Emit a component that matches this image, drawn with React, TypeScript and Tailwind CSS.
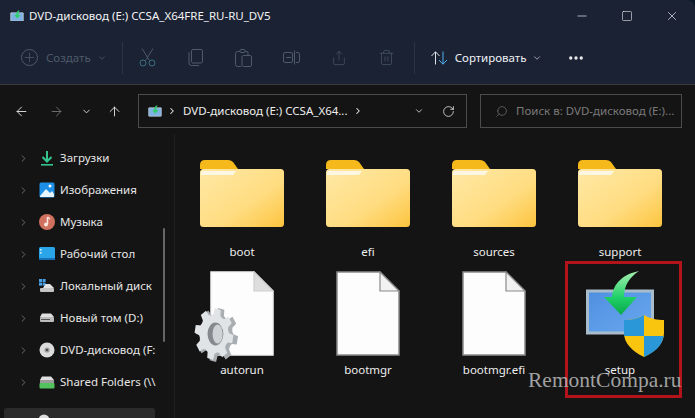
import React from "react";
import { ArrowLeft, ArrowRight, ArrowUp, ChevronDown, ChevronRight, RotateCw, Search, Minus, Square, X, Plus, Share, Trash2, MoreHorizontal } from "lucide-react";

function DriveIcon({ size = 17 }: { size?: number }) {
  return (
    <svg width={size} height={size * 0.85} viewBox="0 0 20 17" className="shrink-0">
      <rect x="1" y="4" width="18" height="12" rx="0.5" fill="#7fb2e0" stroke="#c8d2dc" strokeWidth="1" />
      <path d="M14 0 C10 1 9 3 9 7 H6 L10.5 12 L15 7 H12 C12 4 12.5 2 14 0Z" fill="#2ecf6a" />
    </svg>
  );
}

function Folder({ id }: { id: string }) {
  return (
    <svg width="84" height="67" viewBox="0 0 84 67" className="shrink-0">
      <defs>
        <linearGradient id={id} x1="0" y1="0" x2="1" y2="1">
          <stop offset="0" stopColor="#ffe9a6" />
          <stop offset="0.6" stopColor="#ffdc80" />
          <stop offset="1" stopColor="#fcc43e" />
        </linearGradient>
      </defs>
      <path d="M0 5 Q0 0 5 0 H28 Q31 0 33 2 L38 9 H0Z" fill="#f6b91c" />
      <rect x="0" y="9" width="84" height="58" rx="3.5" fill={`url(#${id})`} />
      <path d="M1 13 Q1 11 3 11 H36 L33 15 H1Z" fill="#fdf6e3" />
    </svg>
  );
}

function FileDoc({ shaded }: { shaded?: boolean }) {
  return (
    <svg width="64" height="85" viewBox="0 0 64 85" className="block shrink-0">
      <path d="M1 1 H44 L63 20 V84 H1Z" fill="#fdfdfd" stroke={shaded ? "#f2f2f2" : "#8a8a8a"} strokeWidth="1.5" />
      <path d="M44 1 V20 H63Z" fill={shaded ? "#dedede" : "#f2f2f2"} stroke={shaded ? "#cfcfcf" : "#8a8a8a"} strokeWidth="1.2" />
    </svg>
  );
}

const gearPoints = (() => {
  const pts: string[] = [];
  for (let i = 0; i < 8; i++) {
    const a = (i * Math.PI) / 4 + 0.2;
    const step = Math.PI / 4;
    const add = (r: number, t: number) =>
      pts.push(`${(r * Math.cos(a + t * step)).toFixed(1)},${(r * Math.sin(a + t * step)).toFixed(1)}`);
    add(20, -0.5);
    add(21, -0.3);
    add(27, -0.2);
    add(27, 0.2);
    add(21, 0.3);
  }
  return pts.join(" ");
})();

function Gear() {
  return (
    <svg width="46" height="55" viewBox="0 0 46 55" className="absolute left-[-17px] top-[36px]">
      <g transform="translate(24 28) scale(0.78 1)">
        <polygon points={gearPoints} fill="#a9aeb3" />
      </g>
      <g transform="translate(21 27) scale(0.72 0.95)">
        <polygon points={gearPoints} fill="#e1e4e7" />
        <ellipse cx="2" cy="0" rx="11" ry="12" fill="#85898e" />
        <ellipse cx="5" cy="0" rx="7" ry="10" fill="#cfd2d5" />
      </g>
    </svg>
  );
}

function SetupIcon() {
  return (
    <svg width="92" height="88" viewBox="-12 0 92 88" className="shrink-0">
      <defs>
        <linearGradient id="scr" x1="0" y1="0" x2="1" y2="1">
          <stop offset="0" stopColor="#4f8fe0" />
          <stop offset="1" stopColor="#6aa8ee" />
        </linearGradient>
        <linearGradient id="arr" x1="0" y1="0" x2="0" y2="1">
          <stop offset="0" stopColor="#a8f0b0" />
          <stop offset="0.6" stopColor="#1fd067" />
          <stop offset="1" stopColor="#0aa84a" />
        </linearGradient>
      </defs>
      <rect x="1.5" y="20" width="65" height="42" fill="url(#scr)" stroke="#a9bccb" strokeWidth="3" />
      <path d="M53 0 C38 3 27 12 26 26 H18 L35 44 L51 26 H38 C38 14 44 6 53 0Z" fill="url(#arr)" />
      <path d="M58 44 C64 48 72 49 78 49 V62 C78 72 70 80 58 86 C46 80 38 72 38 62 V49 C44 49 52 48 58 44Z" fill="#fac50f" />
      <path d="M58 44 C52 48 44 49 38 49 V62 C38 63 38 64 38.3 65 H58Z" fill="#2a98d8" />
      <path d="M58 65 H77.7 C76 75 69 81 58 86Z" fill="#2a98d8" />
    </svg>
  );
}

const nav: { label: string; icon: React.ReactNode }[] = [
  {
    label: "Загрузки",
    icon: (
      <svg width="16" height="17" viewBox="0 0 16 17">
        <path d="M8 1 V11 M3.5 7 L8 11.5 L12.5 7" stroke="#35c48d" strokeWidth="2" fill="none" />
        <rect x="2" y="14" width="12" height="1.6" fill="#35c48d" />
      </svg>
    ),
  },
  {
    label: "Изображения",
    icon: (
      <svg width="16" height="16" viewBox="0 0 16 16">
        <rect width="15" height="15" x="0.5" y="0.5" rx="1.5" fill="#1e8fe6" />
        <path d="M1 14 L7 7 L11 11 L13 9 L15 12 V15 H1Z" fill="#e8f4fc" />
        <circle cx="11" cy="4" r="1.5" fill="#fff" />
      </svg>
    ),
  },
  {
    label: "Музыка",
    icon: (
      <svg width="16" height="16" viewBox="0 0 16 16">
        <circle cx="8" cy="8" r="8" fill="#d0705e" />
        <path d="M8.5 3 V10" stroke="#fbe6e0" strokeWidth="1.5" />
        <circle cx="7" cy="10.5" r="2" fill="#fbe6e0" />
        <path d="M8.5 3 L11 5" stroke="#fbe6e0" strokeWidth="1.5" />
      </svg>
    ),
  },
  {
    label: "Рабочий стол",
    icon: (
      <svg width="16" height="14" viewBox="0 0 16 14">
        <rect width="16" height="12" rx="1.5" fill="#2aa5e8" />
        <rect x="0" y="11" width="16" height="2" fill="#1570b8" />
        <rect x="1" y="2" width="1.6" height="1.6" fill="#cfeefc" />
        <rect x="1" y="5" width="1.6" height="1.6" fill="#cfeefc" />
      </svg>
    ),
  },
  {
    label: "Локальный диск",
    icon: (
      <svg width="16" height="14" viewBox="0 0 16 14">
        <rect x="0" y="0" width="3" height="3" fill="#4aa3e8" />
        <rect x="3.6" y="0" width="3" height="3" fill="#4aa3e8" />
        <rect x="0" y="3.6" width="3" height="3" fill="#4aa3e8" />
        <rect x="3.6" y="3.6" width="3" height="3" fill="#4aa3e8" />
        <path d="M6.5 5 H11 L15 9 H4Z" fill="#e4e4e4" />
        <rect x="1" y="9" width="14" height="4" rx="1" fill="#c4c4c4" />
      </svg>
    ),
  },
  {
    label: "Новый том (D:)",
    icon: (
      <svg width="16" height="10" viewBox="0 0 16 10">
        <path d="M3 0.5 H12 L15 4 H1Z" fill="#e0e0e0" />
        <rect x="1" y="4" width="14" height="5" rx="1" fill="#bdbdbd" />
        <rect x="2" y="6" width="9" height="1" fill="#555" />
      </svg>
    ),
  },
  {
    label: "DVD-дисковод (F:",
    icon: (
      <svg width="16" height="16" viewBox="0 0 16 16">
        <circle cx="8" cy="8" r="7.5" fill="#dcdcdc" />
        <circle cx="8" cy="8" r="2.6" fill="#9a9a9a" />
        <circle cx="8" cy="8" r="1" fill="#333" />
      </svg>
    ),
  },
  {
    label: "Shared Folders (\\\\",
    icon: (
      <svg width="16" height="13" viewBox="0 0 16 13">
        <path d="M3 0.5 H12 L15 4 H1Z" fill="#e0e0e0" />
        <rect x="1" y="4" width="14" height="3" fill="#9a9a9a" />
        <rect x="0.5" y="7" width="15" height="5.5" rx="1" fill="#52c25f" />
      </svg>
    ),
  },
];

const files = [
  { label: "autorun", kind: "gear" },
  { label: "bootmgr", kind: "file" },
  { label: "bootmgr.efi", kind: "file" },
  { label: "setup", kind: "setup" },
];

export default function App() {
  const tb = "text-[#4e5a68]";
  return (
    <div className="relative flex h-[418px] w-[695px] flex-col overflow-hidden bg-[#0b1626] text-[11.5px] [font-family:'Noto_Sans','Liberation_Sans',sans-serif]">
      {/* Title + toolbar */}
      <div className="flex h-[85px] shrink-0 flex-col rounded-tr-[8px] border-b border-[#3a3a3a] bg-[#1a2234]">
        <div className="flex h-[31px] items-center pl-[10px] pr-[16px]">
          <DriveIcon size={14} />
          <span className="ml-[5px] text-[#f2f2f2]">DVD-дисковод (E:) CCSA_X64FRE_RU-RU_DV5</span>
          <div className="ml-auto flex items-center gap-[32px] text-[#eee]">
            <Minus size={14} strokeWidth={1.2} />
            <Square size={12} strokeWidth={1.2} />
            <X size={14} strokeWidth={1.2} />
          </div>
        </div>
        <div className="flex h-[53px] items-center pl-[22px]">
          <Plus size={15} strokeWidth={1.2} className={`${tb} rounded-full outline outline-1 outline-[#4e5a68]`} />
          <span className={`ml-[9px] ${tb}`}>Создать</span>
          <ChevronDown size={10} className={`ml-[6px] ${tb}`} />
          <div className="ml-[15px] h-[32px] w-px bg-[#2c3444]" />
          <div className="ml-[16px] flex items-center gap-[31px]">
            <svg width="17" height="19" viewBox="0 0 17 19" fill="none" stroke="#4e5a68">
              <path d="M3 0.5 L10.5 12.5 M14 0.5 L6.5 12.5" />
              <circle cx="4" cy="15" r="3" stroke="#3b6f80" />
              <circle cx="13" cy="15" r="3" stroke="#3b6f80" />
            </svg>
            <svg width="17" height="17" viewBox="0 0 17 17" fill="none" stroke="#4e5a68">
              <rect x="4.5" y="0.5" width="11" height="13.5" rx="1.5" />
              <path d="M2 3 V14 Q2 16.5 4.5 16.5 H12" />
            </svg>
            <svg width="17" height="18" viewBox="0 0 17 18" fill="none" stroke="#4e5a68">
              <path d="M5 2.5 H2.5 Q0.5 2.5 0.5 4.5 V15.5 Q0.5 17.5 2.5 17.5 H6 M10 2.5 H12 Q13 2.5 13 4 V6" />
              <rect x="5" y="0.5" width="5" height="3" rx="1" />
              <rect x="7" y="6.5" width="9.5" height="11" rx="1.5" />
            </svg>
            <svg width="17" height="15" viewBox="0 0 17 15" fill="none" stroke="#4e5a68">
              <rect x="0.5" y="2.5" width="9" height="10" rx="1.5" />
              <path d="M11.5 0.5 V14.5 M13 2.5 H15 Q16.5 2.5 16.5 4 V11 Q16.5 12.5 15 12.5 H13 M3 7.5 H8" />
            </svg>
            <Share size={16} strokeWidth={1} className={tb} />
            <Trash2 size={17} strokeWidth={1} className={tb} />
          </div>
          <div className="ml-[19px] h-[32px] w-px bg-[#2c3444]" />
          <svg width="17" height="14" viewBox="0 0 17 14" fill="none" className="ml-[16px]">
            <path d="M4.5 13.5 V0.8 M0.5 5 L4.5 0.8 L8.5 5" stroke="#d8e0e8" />
            <path d="M12 0.5 V13.2 M8 9 L12 13.2 L16 9" stroke="#4fb2f0" />
          </svg>
          <span className="ml-[7px] text-[#eef1f4]">Сортировать</span>
          <ChevronDown size={10} className="ml-[6px] text-[#bbb]" />
          <MoreHorizontal size={18} strokeWidth={2.4} className="ml-[25px] text-[#eee]" />
        </div>
      </div>
      {/* Address row */}
      <div className="flex h-[49px] shrink-0 items-center bg-[#141414] pt-[3px] pl-[14px] pr-[13px]">
        <ArrowLeft size={15} strokeWidth={1.4} className="text-[#eee]" />
        <ArrowRight size={15} strokeWidth={1.4} className="ml-[20px] text-[#777]" />
        <ChevronDown size={11} strokeWidth={2} className="ml-[17px] text-[#ddd]" />
        <ArrowUp size={15} strokeWidth={1.4} className="ml-[15px] text-[#eee]" />
        <div className="ml-[16px] flex h-[34px] w-[329px] items-center border border-[#4b4b4b] pl-[9px] pr-[11px]">
          <DriveIcon size={14} />
          <ChevronRight size={10} strokeWidth={2.5} className="ml-[5px] text-[#eee]" />
          <span className="ml-[6px] text-[#eee]">DVD-дисковод (E:) CCSA_X64...</span>
          <ChevronRight size={10} strokeWidth={2.5} className="ml-[5px] text-[#eee]" />
          <ChevronDown size={10} strokeWidth={2} className="ml-auto text-[#ddd]" />
          <RotateCw size={13} strokeWidth={1.4} className="ml-[18px] text-[#eee]" />
        </div>
        <div className="ml-[13px] flex h-[34px] flex-1 items-center border border-[#4b4b4b] pl-[14px] text-[#7a7a7a]">
          <Search size={13} strokeWidth={1.2} className="-scale-x-100" />
          <span className="ml-[8px] whitespace-nowrap">Поиск в: DVD-дисковод (E:)...</span>
        </div>
      </div>
      {/* Body */}
      <div className="flex min-h-0 flex-1 bg-[#141414]">
        <div className="relative h-full w-[175px] shrink-0 overflow-hidden border-r border-[#1f1f1f] pt-[8px]">
          {nav.map((n) => (
            <div key={n.label} className="flex h-[32px] items-center">
              <ChevronRight size={11} strokeWidth={1.6} className="ml-[18px] shrink-0 text-[#8a8a8a]" />
              <div className="ml-[10px] flex w-[16px] shrink-0 justify-center">{n.icon}</div>
              <span className="ml-[5px] whitespace-nowrap text-[#e6e6e6]">{n.label}</span>
            </div>
          ))}
          <div className="ml-[4px] mt-[10px] flex h-[32px] w-[151px] items-start rounded-[3px] bg-[#2b2b2b] pl-[34px] pt-[6px]">
            <svg width="12" height="12" viewBox="0 0 12 12" className="shrink-0"><circle cx="6" cy="6" r="5.5" fill="#ddd" /></svg>
            <span className="ml-[5px] whitespace-nowrap text-[#eee]">DVD-дисковод (E:</span>
          </div>
          <div className="absolute left-[163px] top-[94px] h-[114px] w-[2px] rounded bg-[#666]" />
        </div>
        <div className="grid flex-1 grid-cols-[repeat(4,126px)] content-start pl-[4px]">
          {["boot", "efi", "sources", "support"].map((n) => (
            <div key={n} className="flex h-[118px] flex-col items-center pt-[26px]">
              <Folder id={`f-${n}`} />
              <span className="mt-[16px] text-[#eee]">{n}</span>
            </div>
          ))}
          {files.map((f) => (
            <div key={f.label} className="flex flex-col items-center">
              <div className="flex h-[102px] items-start justify-center pt-[19px]">
                {f.kind === "setup" ? (
                  <SetupIcon />
                ) : (
                  <div className="relative">
                    <FileDoc shaded={f.kind === "gear"} />
                    {f.kind === "gear" && <Gear />}
                  </div>
                )}
              </div>
              <span className="mt-[7px] text-[#eee]">{f.label}</span>
            </div>
          ))}
        </div>
      </div>
      {/* Annotation frame and site watermark */}
      <div className="absolute left-[565px] top-[261px] h-[137px] w-[117px] border-[3px] border-[#b3141c]" />
      <div className="absolute left-[528px] top-[366px] text-[21.5px] leading-[28px] text-[#b5b5b5]/90 [font-family:'Liberation_Serif',serif]">RemontCompa.ru</div>
    </div>
  );
}
